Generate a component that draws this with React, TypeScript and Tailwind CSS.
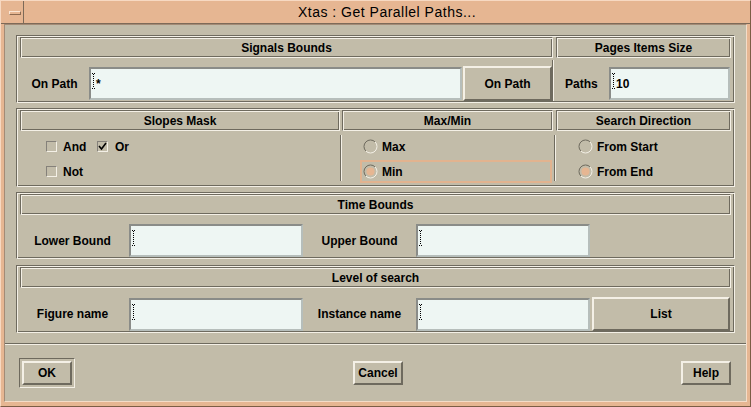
import React from "react";

// Motif-style bevels
const etched =
  "border border-t-[#6e6a5e] border-l-[#6e6a5e] border-r-[#f4f0e6] border-b-[#f4f0e6] shadow-[inset_1px_1px_0_#f4f0e6,inset_-1px_-1px_0_#6e6a5e]";
const raised =
  "border-2 border-t-[#f4f0e6] border-l-[#f4f0e6] border-b-[#6e6a5e] border-r-[#6e6a5e] flex items-center justify-center text-[12px] font-bold";
const field =
  "h-[33px] bg-[#eef6f3] border-2 border-t-[#8a8c88] border-l-[#8a8c88] border-b-[#b6bebb] border-r-[#b6bebb] flex items-center pl-[1px]";

function Caret() {
  return (
    <svg width="3" height="16" viewBox="0 0 3 16" className="shrink-0 self-start mt-[4px]" aria-hidden="true">
      <rect x="0" y="0" width="1" height="1" fill="#000" />
      <rect x="2" y="0" width="1" height="1" fill="#000" />
      <rect x="1" y="1" width="1" height="1" fill="#000" />
      {[3, 5, 7, 9, 11, 13].map((y) => (
        <rect key={y} x="1" y={y} width="1" height="1" fill="#000" />
      ))}
      <rect x="0" y="15" width="1" height="1" fill="#000" />
      <rect x="2" y="15" width="1" height="1" fill="#000" />
    </svg>
  );
}

function Input({ width, value }: { width: string; value?: string }) {
  return (
    <div className={`${field} ${width}`}>
      <Caret />
      {value && <span className="ml-[1px] text-[12px] font-bold leading-none">{value}</span>}
    </div>
  );
}

function Header({ title, width }: { title: string; width: string }) {
  return (
    <div className={`${etched} ${width} h-[21px] flex items-center justify-center text-[12px] font-bold`}>
      {title}
    </div>
  );
}

function VSep() {
  return <div className="w-[2px] border-l border-l-[#6e6a5e] border-r border-r-[#f4f0e6]" />;
}

function Check({ on }: { on?: boolean }) {
  return (
    <span className="w-[11px] h-[11px] shrink-0 border border-t-[#85817a] border-l-[#85817a] border-b-[#f4f0e6] border-r-[#f4f0e6] flex items-center justify-center">
      {on && (
        <svg width="9" height="9" viewBox="0 0 9 9" aria-hidden="true">
          <path d="M1 4 L3.5 7 L8 1" stroke="#000" strokeWidth="1.6" fill="none" />
        </svg>
      )}
    </span>
  );
}

function Radio({ on }: { on?: boolean }) {
  return (
    <svg width="15" height="15" viewBox="0 0 15 15" className="shrink-0" aria-hidden="true">
      <path d="M2.9 12.1 A6.5 6.5 0 0 1 12.1 2.9" stroke="#6e6a5e" fill="none" />
      <path d="M12.1 2.9 A6.5 6.5 0 0 1 2.9 12.1" stroke="#f4f0e6" fill="none" />
      {on && <circle cx="7.5" cy="7.5" r="4" fill="#e6b692" />}
    </svg>
  );
}

function RadioRow({ label, on, focus }: { label: string; on?: boolean; focus?: boolean }) {
  return (
    <div className="h-[25px] flex items-center">
      <div
        className={`h-[23px] w-[192px] border-2 pl-[1px] flex items-center ${
          focus ? "border-[#e2b38f]" : "border-transparent"
        }`}
      >
        <Radio on={on} />
        <span className="ml-[4px] text-[12px] font-bold">{label}</span>
      </div>
    </div>
  );
}

export default function App() {
  return (
    <div className="w-[751px] h-[407px] flex flex-col bg-[#e6b692] border border-t-[#f7d9c2] border-l-[#f7d9c2] border-b-[#7b5d45] border-r-[#7b5d45] text-black font-['Liberation_Sans',Arial,sans-serif] overflow-hidden">
      {/* Title bar */}
      <div className="h-[23px] flex border-b border-b-[#7d6a58]">
        <div className="w-[23px] border-r border-r-[#7d6a58] pl-[8px] pt-[10px]">
          <div className="w-[12px] h-[4px] border border-t-[#fbe6d4] border-l-[#fbe6d4] border-b-[#8c6a50] border-r-[#8c6a50]" />
        </div>
        <div className="flex-1 flex items-center justify-center text-[14px] tracking-[0.5px] pt-[1px]">
          Xtas : Get Parallel Paths...
        </div>
      </div>

      <div className="flex-1 px-[3px] pb-[4px] flex">
        <div className="flex-1 flex flex-col bg-[#c2bca9] border border-t-[#a38b76] border-l-[#a38b76] border-b-[#f4dcc8] border-r-[#f4dcc8]">
          <div className="px-[11px] pt-[10px] flex flex-col">
            {/* Signals Bounds / Pages Items Size */}
            <div className={`${etched} pl-[3px] pr-[3px] pt-[1px] pb-[1px]`}>
              <div className="flex gap-[3px]">
                <Header title="Signals Bounds" width="w-[533px]" />
                <Header title="Pages Items Size" width="w-[175px]" />
              </div>
              <div className="h-[43px] pt-[8px] flex items-center">
                <div className="w-[532px] flex items-center">
                  <div className="w-[69px] text-center text-[12px] font-bold">On Path</div>
                  <Input width="w-[373px]" value="*" />
                  <div className={`${raised} ml-[1px] w-[89px] h-[35px]`}>On Path</div>
                </div>
                <div className="w-[4px] self-stretch -mt-[6px] flex">
                  <VSep />
                </div>
                <div className="w-[175px] flex items-center">
                  <div className="w-[53px] pl-[9px] text-[12px] font-bold">Paths</div>
                  <Input width="w-[121px]" value="10" />
                </div>
              </div>
            </div>

            {/* Slopes Mask / Max/Min / Search Direction */}
            <div className={`${etched} mt-[5px] pl-[3px] pr-[3px] pt-[1px] pb-[1px]`}>
              <div className="flex">
                <Header title="Slopes Mask" width="w-[320px]" />
                <div className="w-[2px]" />
                <Header title="Max/Min" width="w-[211px]" />
                <div className="w-[3px]" />
                <Header title="Search Direction" width="w-[175px]" />
              </div>
              <div className="h-[54px] flex">
                <div className="w-[320px] pt-[3px] pl-[26px] flex flex-col">
                  <div className="h-[25px] flex items-center">
                    <div className="w-[51px] flex items-center">
                      <Check />
                      <span className="ml-[6px] text-[12px] font-bold">And</span>
                    </div>
                    <Check on />
                    <span className="ml-[7px] text-[12px] font-bold">Or</span>
                  </div>
                  <div className="h-[25px] flex items-center">
                    <Check />
                    <span className="ml-[6px] text-[12px] font-bold">Not</span>
                  </div>
                </div>
                <div className="my-[4px] flex">
                  <VSep />
                </div>
                <div className="w-[211px] pt-[3px] pl-[18px] flex flex-col">
                  <RadioRow label="Max" />
                  <RadioRow label="Min" on focus />
                </div>
                <div className="w-[3px] my-[4px] flex justify-end">
                  <VSep />
                </div>
                <div className="w-[175px] pt-[3px] pl-[19px] flex flex-col">
                  <RadioRow label="From Start" />
                  <RadioRow label="From End" on />
                </div>
              </div>
            </div>

            {/* Time Bounds */}
            <div className={`${etched} mt-[5px] pl-[3px] pr-[3px] pt-[1px] pb-[1px]`}>
              <Header title="Time Bounds" width="w-[711px]" />
              <div className="h-[42px] pt-[9px] flex items-center">
                <div className="w-[109px] pr-[4px] text-center text-[12px] font-bold">Lower Bound</div>
                <Input width="w-[174px]" />
                <div className="w-[113px] text-center text-[12px] font-bold">Upper Bound</div>
                <Input width="w-[174px]" />
              </div>
            </div>

            {/* Level of search */}
            <div className={`${etched} mt-[6px] pl-[3px] pr-[3px] pt-[1px] pb-[1px]`}>
              <Header title="Level of search" width="w-[711px]" />
              <div className="h-[43px] pt-[9px] flex items-center">
                <div className="w-[109px] pr-[4px] text-center text-[12px] font-bold">Figure name</div>
                <Input width="w-[174px]" />
                <div className="w-[113px] text-center text-[12px] font-bold">Instance name</div>
                <Input width="w-[174px]" />
                <div className={`${raised} ml-[2px] w-[138px] h-[34px]`}>List</div>
              </div>
            </div>
          </div>

          <div className="mt-[10px] h-[2px] border-t border-t-[#6e6a5e] border-b border-b-[#f4f0e6]" />

          {/* Action buttons */}
          <div className="flex-1 flex items-center justify-between pl-[14px] pr-[15px]">
            <div className="border border-t-[#6e6a5e] border-l-[#6e6a5e] border-b-[#f4f0e6] border-r-[#f4f0e6] p-[2px]">
              <div className={`${raised} w-[50px] h-[24px]`}>OK</div>
            </div>
            <div className={`${raised} w-[50px] h-[24px]`}>Cancel</div>
            <div className={`${raised} w-[50px] h-[24px]`}>Help</div>
          </div>
        </div>
      </div>
    </div>
  );
}
